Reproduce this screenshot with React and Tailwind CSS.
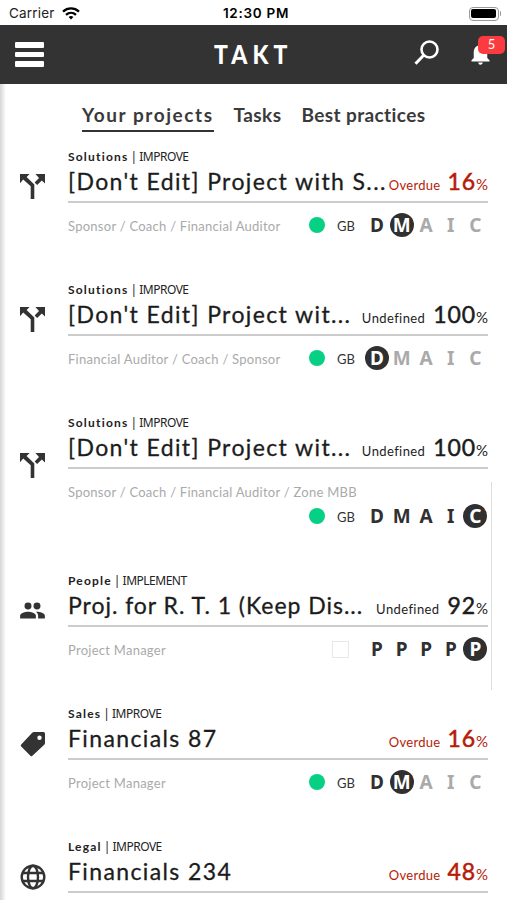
import React, { useState } from 'react';
import { MdNotifications } from 'react-icons/md';

const projects = [
  { id: 1, area: 'Solutions', type: 'IMPROVE', title: "[Don't Edit] Project with S...", status: 'Overdue', percent: 16, roles: 'Sponsor / Coach / Financial Auditor', stages: 'DMAIC', current: 1, icon: 'split' },
  { id: 2, area: 'Solutions', type: 'IMPROVE', title: "[Don't Edit] Project wit...", status: 'Undefined', percent: 100, roles: 'Financial Auditor / Coach / Sponsor', stages: 'DMAIC', current: 0, icon: 'split' },
  { id: 3, area: 'Solutions', type: 'IMPROVE', title: "[Don't Edit] Project wit...", status: 'Undefined', percent: 100, roles: 'Sponsor / Coach / Financial Auditor / Zone MBB', stages: 'DMAIC', current: 4, icon: 'split', tall: true },
  { id: 4, area: 'People', type: 'IMPLEMENT', title: 'Proj. for R. T. 1 (Keep Dis...', status: 'Undefined', percent: 92, roles: 'Project Manager', stages: 'PPPPP', current: 4, icon: 'people', box: true, tight: true },
  { id: 5, area: 'Sales', type: 'IMPROVE', title: 'Financials 87', status: 'Overdue', percent: 16, roles: 'Project Manager', stages: 'DMAIC', current: 1, icon: 'tag' },
  { id: 6, area: 'Legal', type: 'IMPROVE', title: 'Financials 234', status: 'Overdue', percent: 48, icon: 'globe' },
];

const icons = {
  split: (
    <svg width="25" height="25" viewBox="0 0 25 25" fill="currentColor">
      <path d="M0 0h9.6L6.6 3l7.7 7.6V25h-3.6V12.2L3.2 5.6 0 9.2zM15.4 0H25v9.6l-3.2-3.2-4.6 4.7-2.6-2.6L19 3.9z" />
    </svg>
  ),
  people: (
    <svg width="27" height="27" viewBox="0 0 24 24" fill="currentColor" className="-ml-[1px]">
      <circle cx="8" cy="8" r="3.1" />
      <circle cx="16" cy="8" r="3.1" />
      <path d="M8 13c-2.33 0-7 1.17-7 3.5V19h14v-2.5c0-2.33-4.67-3.5-7-3.5z" />
      <path d="M16 13c-.29 0-.62.02-.97.05 1.16.84 1.97 1.97 1.97 3.45V19h6v-2.5c0-2.33-4.67-3.5-7-3.5z" />
    </svg>
  ),
  tag: (
    <svg width="26" height="26" viewBox="0 0 26 26" fill="currentColor">
      <path fillRule="evenodd" d="M14 1h9.5q1.5 0 1.5 1.5V12q0 1-.8 1.8L12.4 24.7q-1 1-2 0L1.2 15.6q-1-1 0-2L12.2 1.8Q13 1 14 1zm5.5 3.6a2.2 2.2 0 100 4.4 2.2 2.2 0 000-4.4z" />
    </svg>
  ),
  globe: (
    <svg width="26" height="26" viewBox="0 0 26 26" fill="none" stroke="currentColor" strokeWidth="2.4">
      <circle cx="13" cy="13" r="11.3" />
      <ellipse cx="13" cy="13" rx="5" ry="11.3" />
      <path d="M2.5 9h21M2.5 17h21" />
    </svg>
  ),
};

const StatusBar = () => (
  <div className="flex h-[25px] items-center justify-between bg-white pr-[6px] pl-[9px] pt-[2px] font-['Inter'] text-[13.5px] tracking-[0.2px] text-[#222]">
    <div className="flex w-[100px] items-center gap-[7px]">
      <span>Carrier</span>
      <svg width="18" height="13" viewBox="0 0 18 13" fill="none" stroke="#000" strokeWidth="2.3">
        <path d="M1 4.6C5.6.4 12.4.4 17 4.6" />
        <path d="M4 7.8c2.9-2.7 7.1-2.7 10 0" />
        <path d="M6.6 9.9c1.5-1.2 3.3-1.2 4.8 0L9 12.4z" fill="#000" stroke="none" />
      </svg>
    </div>
    <span className="pl-[2px] font-semibold tracking-[0.7px] text-black">12:30 PM</span>
    <div className="flex w-[100px] items-center justify-end gap-px">
      <div className="h-[14px] w-[30px] rounded-[4px] border border-[#999] p-[1.5px]">
        <div className="h-full rounded-[2px] bg-black" />
      </div>
      <div className="h-[5px] w-[1.5px] rounded-r bg-[#999]" />
    </div>
  </div>
);

const Header = () => (
  <header className="flex h-[59px] items-center justify-between bg-[#333] pr-[13px] pl-[15px]">
    <button className="flex w-[90px] flex-col gap-[4px]">
      <span className="h-[5.5px] w-[29px] rounded-[1px] bg-white" />
      <span className="h-[5.5px] w-[29px] rounded-[1px] bg-white" />
      <span className="h-[5.5px] w-[29px] rounded-[1px] bg-white" />
    </button>
    <h1 className="-ml-[2px] scale-x-85 text-[27px] font-black tracking-[6px] text-white">TAKT</h1>
    <div className="flex w-[90px] items-center justify-end gap-[27px]">
      <svg width="26" height="26" viewBox="0 0 26 26" fill="none" stroke="#fff" strokeWidth="2.6" className="mb-[4px] shrink-0">
        <circle cx="15.5" cy="9.5" r="8" />
        <path d="M9.7 15.3L1.5 23.8" strokeWidth="3" />
      </svg>
      <div className="relative mb-[2px]">
        <MdNotifications size={27} className="text-white" />
        <span className="absolute -top-[4px] left-[11px] flex h-[18px] w-[27px] items-center justify-center rounded-[5px] bg-[#fb3b3f] text-[13px] text-white">5</span>
      </div>
    </div>
  </header>
);

const Stages = ({ project }) => (
  <div className="flex h-6 items-center">
    {project.box ? (
      <span className="mr-[16px] size-[17px] border border-[#e8e8e8]" />
    ) : (
      <>
        <span className="mr-[12px] size-4 rounded-full bg-[#06d084]" />
        <span className="w-[28px] pt-[3px] text-[13px] text-[#333]">GB</span>
      </>
    )}
    <div className="grid w-[123px] grid-cols-5">
      {project.stages.split('').map((letter, i) => (
        <span
          key={i}
          className={`flex size-6 items-center justify-center rounded-full font-['Noto_Sans'] text-[19px] leading-none font-bold ${
            i === project.current ? 'bg-[#303030] text-white' : i < project.current ? 'text-[#303030]' : 'text-[#aaa]'
          }`}
        >
          {letter}
        </span>
      ))}
    </div>
  </div>
);

const ProjectRow = ({ project }) => (
  <li className={`flex pr-[19px] ${project.tall ? 'h-[158px]' : 'h-[133px]'}`}>
    <div className={`flex w-[68px] shrink-0 items-center pl-[20px] text-[#333] ${project.tall ? 'h-[100px]' : 'h-[75px]'}`}>
      {icons[project.icon]}
    </div>
    <div className="min-w-0 flex-1">
      <div className="flex h-4 items-center text-[12px] text-[#222]">
        <span className="font-bold tracking-[1.2px]">{project.area}</span>
        <span className="ml-[2px] font-['Noto_Sans'] text-[12px] tracking-[-0.5px]">| {project.type}</span>
      </div>
      <div className={`flex h-[38px] items-baseline justify-between border-b-2 border-[#ccc] pt-px whitespace-nowrap ${project.status === 'Overdue' ? 'text-[#b61b08]' : 'text-[#1c1c1c]'}`}>
        <h2 className={`text-[23px] leading-[30px] text-[#1c1c1c] [-webkit-text-stroke:0.3px] ${project.tight ? 'tracking-[0.97px]' : 'tracking-[1.38px]'}`}>{project.title}</h2>
        <div className="flex items-baseline leading-[30px]">
          <span className={`text-[13px] ${project.status === 'Overdue' ? 'mr-[7px] tracking-[0.3px]' : 'mr-[8px] tracking-[0.4px]'}`}>{project.status}</span>
          <span className="text-[23px] tracking-[0.9px] [-webkit-text-stroke:0.5px]">{project.percent}</span>
          <span className="text-[15px]">%</span>
        </div>
      </div>
      {project.stages && (
        <div className={`flex justify-between pt-[10px] ${project.tall ? 'flex-col items-stretch' : ''}`}>
          <p className="h-[25px] pt-[3px] text-[13px] leading-[20px] tracking-[0.26px] whitespace-nowrap text-[#aaa]">{project.roles}</p>
          <div className="flex justify-end">
            <Stages project={project} />
          </div>
        </div>
      )}
    </div>
  </li>
);

const App = () => {
  const [tab, setTab] = useState('Your projects');

  return (
    <div className="relative h-[900px] w-[507px] overflow-hidden bg-white font-['Lato',sans-serif]">
      <StatusBar />
      <Header />
      <nav className="flex h-[65px] items-start pt-[17px] pl-[82px] text-[19px] font-bold text-[#3a3a3a]">
        {['Your projects', 'Tasks', 'Best practices'].map((name) => (
          <button
            key={name}
            onClick={() => setTab(name)}
            className={`mr-[20px] h-[31px] border-b-2 pb-[3px] whitespace-nowrap ${tab === name ? 'border-[#333] tracking-[1.57px]' : 'border-transparent tracking-[0.4px]'}`}
          >
            {name}
          </button>
        ))}
      </nav>
      <ul>
        {projects.map((project) => (
          <ProjectRow key={project.id} project={project} />
        ))}
      </ul>
      {/* page edge shadow and scroll indicator */}
      <div className="absolute top-[84px] bottom-0 left-0 w-[6px] bg-linear-to-r from-[#d5d5d5] to-transparent" />
      <div className="absolute top-[482px] left-[491px] h-[208px] w-px bg-[#ddd]" />
    </div>
  );
};

export default App;
